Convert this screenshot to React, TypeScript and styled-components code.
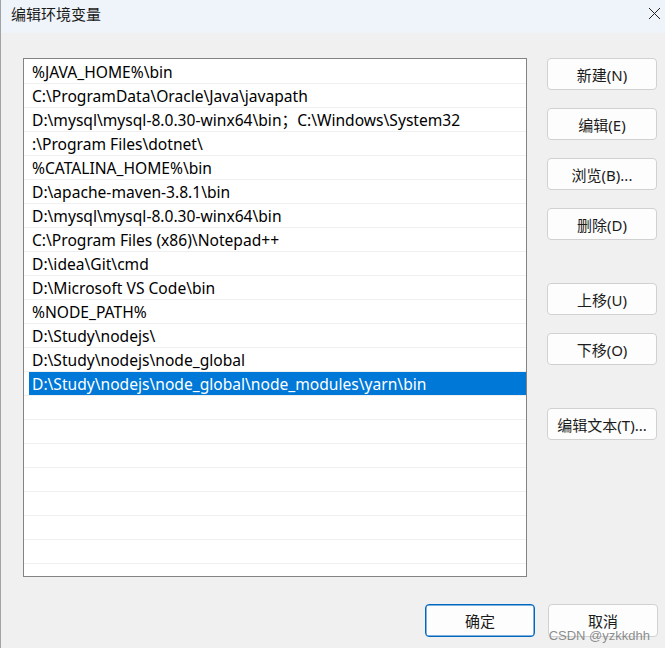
import { FC } from "react";
import styled, { createGlobalStyle } from "styled-components";

const GlobalStyle = createGlobalStyle`
  html, body {
    margin: 0;
    padding: 0;
    background: #f0f0f0;
  }
  body {
    font-family: "Noto Sans", "Noto Sans CJK SC", sans-serif;
    color: #000;
  }
`;

const paths = [
  "%JAVA_HOME%\\bin",
  "C:\\ProgramData\\Oracle\\Java\\javapath",
  "D:\\mysql\\mysql-8.0.30-winx64\\bin；C:\\Windows\\System32",
  ":\\Program Files\\dotnet\\",
  "%CATALINA_HOME%\\bin",
  "D:\\apache-maven-3.8.1\\bin",
  "D:\\mysql\\mysql-8.0.30-winx64\\bin",
  "C:\\Program Files (x86)\\Notepad++",
  "D:\\idea\\Git\\cmd",
  "D:\\Microsoft VS Code\\bin",
  "%NODE_PATH%",
  "D:\\Study\\nodejs\\",
  "D:\\Study\\nodejs\\node_global",
  "D:\\Study\\nodejs\\node_global\\node_modules\\yarn\\bin",
];

const SELECTED = 13;
const EMPTY_ROWS = 8;

const sideButtons = [
  { label: "新建(N)", gap: 0 },
  { label: "编辑(E)", gap: 18 },
  { label: "浏览(B)...", gap: 18 },
  { label: "删除(D)", gap: 18 },
  { label: "上移(U)", gap: 43 },
  { label: "下移(O)", gap: 18 },
  { label: "编辑文本(T)...", gap: 43 },
];

const Window = styled.div`
  width: 665px;
  height: 648px;
  display: flex;
  flex-direction: column;
  background: #f0f0f0;
  border-left: 1px solid #a3a3a3;
  box-sizing: border-box;
  overflow: hidden;
`;

const TitleBar = styled.div`
  flex: none;
  height: 33px;
  display: flex;
  align-items: center;
  justify-content: space-between;
  padding: 0 4px 6px 10px;
  box-sizing: border-box;
  background: #eef4f9;
`;

const Title = styled.div`
  font-size: 15px;
  font-family: "Noto Sans CJK SC", sans-serif;
  color: #1a1a1a;
`;

const CloseIcon = styled.svg`
  width: 13px;
  height: 13px;
`;

const Body = styled.div`
  flex: 1;
  display: flex;
  flex-direction: column;
  padding: 25px 7px 0 22px;
`;

const MainRow = styled.div`
  display: flex;
  align-items: flex-start;
  gap: 20px;
`;

const PathList = styled.div`
  width: 504px;
  height: 519px;
  box-sizing: border-box;
  border: 1px solid #838383;
  background: #fff;
  padding-top: 1px;
  overflow: hidden;
`;

const PathRow = styled.div`
  height: 24px;
  box-sizing: border-box;
  border-bottom: 1px solid #f0f0f0;
  display: flex;
  padding-left: 5px;
`;

const PathText = styled.div<{ $selected?: boolean }>`
  flex: 1;
  display: flex;
  align-items: center;
  padding-left: 3px;
  font-size: 15.6px;
  white-space: nowrap;
  background: ${(p) => (p.$selected ? "#0078d7" : "transparent")};
  color: ${(p) => (p.$selected ? "#fff" : "#000")};
`;

const SideButtons = styled.div`
  display: flex;
  flex-direction: column;
`;

const Button = styled.button<{ $gap?: number; $primary?: boolean }>`
  width: 110px;
  height: 32px;
  margin-top: ${(p) => p.$gap ?? 0}px;
  border-radius: 4px;
  border: 1px solid ${(p) => (p.$primary ? "#0067c0" : "#d1d1d1")};
  box-shadow: ${(p) => (p.$primary ? "inset 0 0 0 0.5px #0067c0" : "none")};
  background: #fdfdfd;
  font-family: "Noto Sans", "Noto Sans CJK SC", sans-serif;
  font-size: 15px;
  color: #1b1b1b;
  padding: 0;
  cursor: default;
`;

const FooterButton = styled(Button)`
  height: 33px;
`;

const Footer = styled.div`
  display: flex;
  justify-content: flex-end;
  gap: 13px;
  margin-top: 27px;
  position: relative;
`;

const Watermark = styled.div`
  position: absolute;
  right: 8px;
  bottom: -6px;
  font-family: "Liberation Sans", sans-serif;
  font-size: 13px;
  color: rgba(120, 120, 120, 0.85);
  pointer-events: none;
`;

const App: FC = () => {
  return (
    <>
      <GlobalStyle />
      <Window>
        <TitleBar>
          <Title>编辑环境变量</Title>
          <CloseIcon viewBox="0 0 13 13">
            <path d="M1 1 L12 12 M12 1 L1 12" stroke="#222" strokeWidth="1" />
          </CloseIcon>
        </TitleBar>
        <Body>
          <MainRow>
            <PathList>
              {paths.map((p, i) => (
                <PathRow key={p}>
                  <PathText $selected={i === SELECTED}>{p}</PathText>
                </PathRow>
              ))}
              {Array.from({ length: EMPTY_ROWS }).map((_, i) => (
                <PathRow key={`empty-${i}`}>
                  <PathText />
                </PathRow>
              ))}
            </PathList>
            <SideButtons>
              {sideButtons.map((b) => (
                <Button key={b.label} $gap={b.gap}>
                  {b.label}
                </Button>
              ))}
            </SideButtons>
          </MainRow>
          <Footer>
            <FooterButton $primary>确定</FooterButton>
            <FooterButton>取消</FooterButton>
            <Watermark>CSDN @yzkkdhh</Watermark>
          </Footer>
        </Body>
      </Window>
    </>
  );
};

export default App;
